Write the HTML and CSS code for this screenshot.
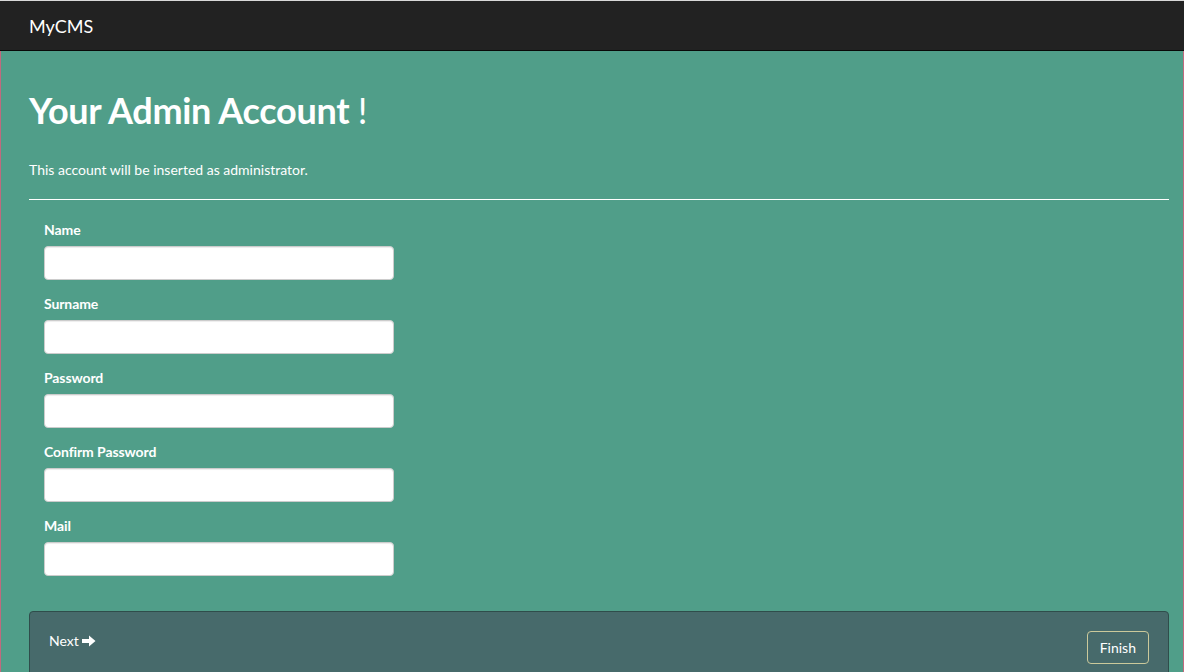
FILE: index.html
```html
<!DOCTYPE html>
<html>
<head>
<meta charset="utf-8">
<link rel="stylesheet" href="styles.css">
</head>
<body>
<nav class="navbar"><span class="brand">MyCMS</span></nav>
<main class="page">
  <h1 class="title">Your Admin Account <span class="bang">!</span></h1>
  <p class="lead">This account will be inserted as administrator.</p>
  <hr class="rule">
  <form class="form">
    <div class="group"><label>Name</label><input type="text"></div>
    <div class="group"><label>Surname</label><input type="text"></div>
    <div class="group"><label>Password</label><input type="password"></div>
    <div class="group"><label>Confirm Password</label><input type="password"></div>
    <div class="group"><label>Mail</label><input type="text"></div>
  </form>
  <div class="panel">
    <a class="next">Next <svg class="arrow" width="14" height="12" viewBox="0 0 14 12"><path d="M0 4h7V0.5L13.5 6 7 11.5V8H0z" fill="#fff"/></svg></a>
    <button class="finish" type="button">Finish</button>
  </div>
</main>
</body>
</html>
```
FILE: styles.css
```css
html, body { margin: 0; padding: 0; }
body {
  font-family: Lato, "Open Sans", sans-serif;
  background: #509e89;
  color: #fff;
  height: 672px;
  overflow: hidden;
}
.navbar {
  height: 49px;
  background: #222;
  border-top: 1px solid #d9d9d9;
  border-bottom: 1px solid #080808;
  display: flex;
  align-items: center;
  padding-left: 29px;
}
.brand { font-size: 18px; color: #fff; }
.page {
  border-left: 1px solid #c06a7e;
  border-right: 1px solid #c06a7e;
  padding: 0 14px 0 28px;
  height: 621px;
  box-sizing: border-box;
  overflow: hidden;
}
.title {
  margin: 0;
  padding-top: 39px;
  font-size: 36px;
  font-weight: 700;
  line-height: 40px;
  letter-spacing: -0.3px;
}
.bang { font-weight: 400; }
.lead {
  margin: 30px 0 0;
  font-size: 14px;
  line-height: 20px;
}
.rule {
  margin: 19px 0 0;
  border: 0;
  border-top: 1px solid #fff;
  height: 0;
}
.form {
  padding: 20px 0 0 15px;
  display: flex;
  flex-direction: column;
  gap: 14px;
}
.group { display: flex; flex-direction: column; }
.group label {
  font-size: 14px;
  font-weight: 700;
  line-height: 20px;
  margin-bottom: 6px;
  letter-spacing: -0.1px;
}
.group input {
  width: 350px;
  height: 34px;
  box-sizing: border-box;
  border: 1px solid #ccc;
  border-radius: 4px;
  background: #fff;
  box-shadow: inset 0 1px 1px rgba(0,0,0,.075);
  margin: 0;
}
.panel {
  margin-top: 35px;
  background: #476a6b;
  border: 1px solid #2f4d4b;
  border-radius: 4px;
  padding: 19px 19px 20px 19px;
  display: flex;
  justify-content: space-between;
  align-items: flex-start;
  height: 80px;
}
.next {
  font-size: 14px;
  color: #fff;
  line-height: 20px;
  display: flex;
  align-items: center;
  gap: 3px;
}
.finish {
  font-family: Lato, sans-serif;
  font-size: 14px;
  color: #fff;
  background: transparent;
  border: 1px solid #cbc99b;
  border-radius: 4px;
  padding: 0 12px;
  height: 33px;
}
```
